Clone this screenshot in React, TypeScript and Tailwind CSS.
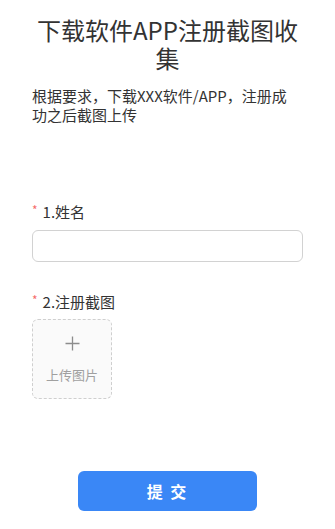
import React from "react";

const FONT = "font-['Microsoft_YaHei','Noto_Sans_CJK_SC',sans-serif]";

function Label({ text }: { text: string }) {
  return (
    <div className="flex items-start text-[15px] leading-[22px] text-[#333]">
      <span className="mr-[5px] mt-[1px] text-[12px] leading-[16px] text-[#f56c6c]">*</span>
      <span>{text}</span>
    </div>
  );
}

export default function App() {
  return (
    <div className={`min-h-screen bg-white ${FONT}`}>
      <div className="px-8 pt-[16px]">
        {/* 标题 */}
        <h1 className="text-center text-[24px] leading-[28px] font-normal text-[#333]">
          下载软件APP注册截图收集
        </h1>
        <p className="mt-[15px] max-w-[268px] text-[15px] leading-[18.5px] text-[#333]">
          根据要求，下载XXX软件/APP，注册成功之后截图上传
        </p>

        {/* 表单 */}
        <div className="mt-[77px]">
          <Label text="1.姓名" />
          <input
            type="text"
            className="mt-[7px] block h-[32px] w-full rounded-[6px] border border-[#d2d2d2] px-3 text-[14px] outline-none"
          />
        </div>

        <div className="mt-[29px]">
          <Label text="2.注册截图" />
          <div className="mt-[6px] flex h-[80px] w-[80px] flex-col items-center justify-center rounded-[6px] border border-dashed border-[#cfcfcf] bg-[#fafafa]">
            <svg width="15" height="15" viewBox="0 0 15 15" className="mt-[1px]">
              <path d="M7.5 0.5v14M0.5 7.5h14" stroke="#8c8c8c" strokeWidth="1.3" />
            </svg>
            <span className="mt-[16px] text-[13px] leading-[16px] text-[#a0a0a0]">上传图片</span>
          </div>
        </div>

        {/* 提交 */}
        <div className="mt-[72px] flex justify-center">
          <button className="h-[40px] w-[179px] rounded-[6px] bg-[#3a87f6] text-[16px] font-semibold tracking-[2px] text-white">
            提 交
          </button>
        </div>
      </div>
    </div>
  );
}
